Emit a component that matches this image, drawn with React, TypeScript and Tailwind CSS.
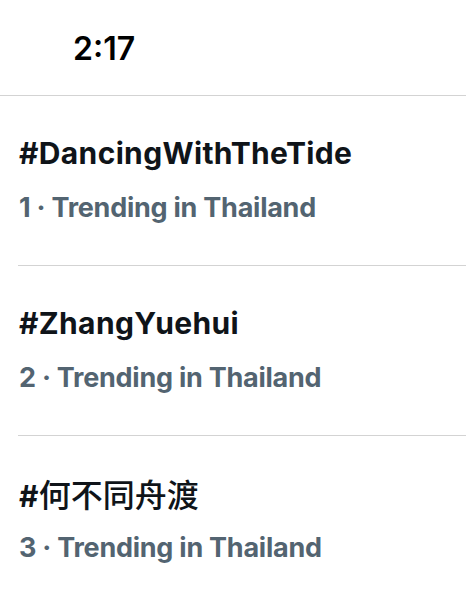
import React from 'react';

type Trend = {
  rank: number;
  tag: string;
  cjk?: string;
};

const trends: Trend[] = [
  { rank: 1, tag: '#DancingWithTheTide' },
  { rank: 2, tag: '#ZhangYuehui' },
  { rank: 3, tag: '#', cjk: '何不同舟渡' },
];

const App = () => {
  return (
    <div className="w-[466px] h-[597px] bg-white overflow-hidden font-['Inter','Noto_Sans_CJK_SC',sans-serif]">
      {/* status bar */}
      <div className="h-[96px] border-b border-[#d3d3d3] pl-[73px] pt-[31px]">
        <span className="text-[32px] leading-[36px] font-semibold text-black">2:17</span>
      </div>

      {trends.map((t, i) => (
        <div key={t.rank}>
          <div className="px-[19px] pt-[39px] pb-[41px] flex flex-col gap-[21px]">
            <p className="h-[36px] text-[30px] leading-[36px] font-bold text-[#0f1419] tracking-[0.35px] whitespace-nowrap">
              {t.tag}
              {t.cjk && (
                <span className="text-[32px] font-medium tracking-[0px] font-['Noto_Sans_CJK_SC',sans-serif]">{t.cjk}</span>
              )}
            </p>
            <p className="text-[27px] leading-[32px] font-bold text-[#536471] tracking-[-0.25px]">
              {t.rank} · Trending in Thailand
            </p>
          </div>
          {i < trends.length - 1 && <div className="ml-[18px] h-px bg-[#d3d3d3]" />}
        </div>
      ))}
    </div>
  );
};

export default App;
